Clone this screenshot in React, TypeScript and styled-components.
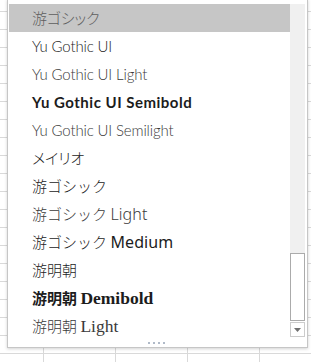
import React from "react";
import styled, { createGlobalStyle, css } from "styled-components";

const GlobalStyle = createGlobalStyle`
  html, body { margin: 0; padding: 0; background: #ffffff; overflow: hidden; }
  body { font-family: Lato, "Noto Sans CJK JP", sans-serif; }
`;

const Sheet = styled.div`
  position: relative;
  width: 311px;
  height: 362px;
  overflow: hidden;
  background-color: #ffffff;
  background-image:
    linear-gradient(to right, #d9d9d9 1px, transparent 1px),
    linear-gradient(to bottom, #d9d9d9 1px, transparent 1px);
  background-size: 72px 18px;
  background-position: 43px 11px;
`;

const Popup = styled.div`
  position: absolute;
  left: 7px;
  top: -1px;
  width: 299px;
  border: 1px solid #c6c6c6;
  background: #ffffff;
  box-shadow: 0 1px 3px rgba(0, 0, 0, 0.18);
  display: flex;
  flex-direction: column;
`;

const Body = styled.div`
  display: flex;
  padding-top: 4px;
`;

const List = styled.ul`
  list-style: none;
  margin: 0;
  padding: 0 0 0 1px;
  width: 281px;
`;

type Family = "ui" | "gothic" | "meiryo" | "mincho";

const familyCss: Record<Family, ReturnType<typeof css>> = {
  ui: css`
    font-family: Lato, "Noto Sans CJK JP", sans-serif;
    font-feature-settings: "palt";
    letter-spacing: -0.15px;
  `,
  gothic: css`
    font-family: "Noto Sans CJK JP", sans-serif;
  `,
  meiryo: css`
    font-family: "Noto Sans CJK JP", sans-serif;
    font-feature-settings: "palt";
  `,
  mincho: css`
    font-family: "Noto Sans CJK JP", serif;
  `,
};

const latinCss: Record<Family, ReturnType<typeof css>> = {
  ui: css``,
  meiryo: css``,
  gothic: css`
    font-family: "Noto Sans", sans-serif;
    font-size: 16px;
    letter-spacing: 0.1px;
  `,
  mincho: css`
    font-family: "Liberation Serif", serif;
    font-size: 17.5px;
  `,
};

const Item = styled.li<{ $family: Family; $active?: boolean; $soft?: boolean }>`
  height: 28px;
  line-height: 28px;
  padding-left: 23px;
  font-size: 15px;
  white-space: nowrap;
  color: ${(p) => (p.$active ? "#5e5e5e" : p.$soft ? "#3a3a3a" : "#1c1c1c")};
  background: ${(p) => (p.$active ? "#c6c6c6" : "transparent")};
  ${(p) => familyCss[p.$family]}
`;

const Main = styled.span<{ $weight: number; $wide?: boolean }>`
  font-weight: ${(p) => p.$weight};
  ${(p) => (p.$wide ? "letter-spacing: 0.5px;" : "")}
`;

const Latin = styled.span<{ $family: Family; $weight: number }>`
  font-weight: ${(p) => p.$weight};
  ${(p) => latinCss[p.$family]}
`;

const Scrollbar = styled.div`
  width: 15px;
  display: flex;
  flex-direction: column;
  margin-right: 2px;
`;

const Track = styled.div`
  flex: 1;
  background: #f0f0f0;
`;

const Thumb = styled.div`
  height: 66px;
  border: 1px solid #ababab;
  background: #ffffff;
`;

const ArrowButton = styled.div`
  margin-top: 1px;
  height: 13px;
  border: 1px solid #cccccc;
  background: #ffffff;
  display: flex;
  align-items: center;
  justify-content: center;
  margin-bottom: 3px;
`;

const Footer = styled.div`
  height: 7px;
  display: flex;
  justify-content: center;
  align-items: flex-start;
  margin-left: -3px;
`;

const Grip = styled.div`
  display: flex;
  gap: 3px;
  margin-top: 2px;
`;

const Dot = styled.span`
  width: 2px;
  height: 2px;
  background: #b0bac8;
`;

type FontEntry = {
  main: string;
  latin?: string;
  family: Family;
  weight: number;
  latinWeight?: number;
  soft?: boolean;
  wide?: boolean;
  active?: boolean;
};

const fonts: FontEntry[] = [
  { main: "游ゴシック", family: "ui", weight: 300, active: true },
  { main: "Yu Gothic UI", family: "ui", weight: 300 },
  { main: "Yu Gothic UI Light", family: "ui", weight: 300, soft: true },
  { main: "Yu Gothic UI Semibold", family: "ui", weight: 700, wide: true },
  { main: "Yu Gothic UI Semilight", family: "ui", weight: 300, soft: true },
  { main: "メイリオ", family: "meiryo", weight: 300 },
  { main: "游ゴシック", family: "gothic", weight: 300 },
  { main: "游ゴシック", latin: "Light", family: "gothic", weight: 300, latinWeight: 300, soft: true },
  { main: "游ゴシック", latin: "Medium", family: "gothic", weight: 300, latinWeight: 400 },
  { main: "游明朝", family: "mincho", weight: 300 },
  { main: "游明朝", latin: "Demibold", family: "mincho", weight: 700, latinWeight: 700 },
  { main: "游明朝", latin: "Light", family: "mincho", weight: 300, latinWeight: 400, soft: true },
];

export default function App() {
  return (
    <>
      <GlobalStyle />
      <Sheet>
        <Popup>
          <Body>
            <List>
              {fonts.map((f, i) => (
                <Item key={i} $family={f.family} $active={f.active} $soft={f.soft}>
                  <Main $weight={f.weight} $wide={f.wide}>
                    {f.main}
                  </Main>
                  {f.latin && (
                    <>
                      {" "}
                      <Latin $family={f.family} $weight={f.latinWeight ?? 400}>
                        {f.latin}
                      </Latin>
                    </>
                  )}
                </Item>
              ))}
            </List>
            <Scrollbar>
              <Track />
              <Thumb />
              <ArrowButton>
                <svg width="7" height="4" viewBox="0 0 7 4">
                  <path d="M0 0H7L3.5 4Z" fill="#707070" />
                </svg>
              </ArrowButton>
            </Scrollbar>
          </Body>
          <Footer>
            <Grip>
              <Dot />
              <Dot />
              <Dot />
              <Dot />
            </Grip>
          </Footer>
        </Popup>
      </Sheet>
    </>
  );
}
